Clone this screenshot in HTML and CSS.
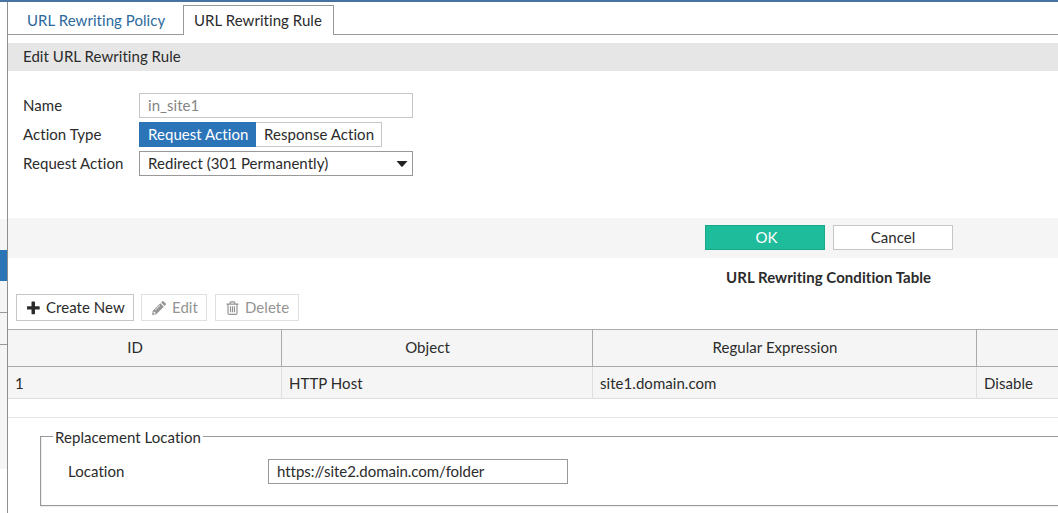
FILE: index.html
```html
<!DOCTYPE html>
<html lang="en">
<head>
    <meta charset="UTF-8">
    <meta name="viewport" content="width=device-width, initial-scale=1.0">
    <title>URL Rewriting Rule</title>
    <link rel="stylesheet" href="styles.css">
</head>
<body>
    <div class="sidebar">
        <div class="side-item first"></div>
        <div class="side-item active"></div>
        <div class="side-item"></div>
        <div class="side-item bordered"></div>
        <div class="side-item bordered last"></div>
    </div>
    <div class="main">
        <div class="tabs">
            <a class="tab">URL Rewriting Policy</a>
            <a class="tab active">URL Rewriting Rule</a>
            <div class="tab-fill"></div>
        </div>
        <div class="title-bar">Edit URL Rewriting Rule</div>

        <form class="rule-form">
            <div class="form-row">
                <label>Name</label>
                <div class="field disabled">in_site1</div>
            </div>
            <div class="form-row">
                <label>Action Type</label>
                <div class="toggle">
                    <span class="option selected">Request Action</span>
                    <span class="option">Response Action</span>
                </div>
            </div>
            <div class="form-row">
                <label>Request Action</label>
                <div class="field select">
                    <span>Redirect (301 Permanently)</span>
                    <svg class="caret" width="12" height="6" viewBox="0 0 12 6"><path d="M0.5 0H11.5L6.7 5.4Q6 6 5.3 5.4Z"/></svg>
                </div>
            </div>
        </form>

        <div class="actions">
            <div class="btn ok">OK</div>
            <div class="btn">Cancel</div>
        </div>

        <div class="table-title">URL Rewriting Condition Table</div>
        <div class="toolbar">
            <div class="tool create">
                <svg width="14" height="14" viewBox="0 0 14 14"><path d="M5.1 .5h2.300q.6 0 .6.6v4.100h4.100q.6 0 .6.6v2.100q0 .6-.6.6H8v4.100q0 .6-.6.6H5.100q-.6 0-.6-.6V8.500H.6q-.6 0-.6-.6V5.800q0-.6.6-.6H4.500V1.100q0-.6.6-.6z"/></svg>
                <span>Create New</span>
            </div>
            <div class="tool edit disabled">
                <svg width="14" height="14" viewBox="0 0 14 14"><path fill-rule="evenodd" d="M0 14l.8-4.200L8.300 2.300l3.500 3.500L4.200 13.200zM9.100 1.500L10.300.4q.7-.7 1.400 0l2 2q.6.7 0 1.400L12.600 5zM1.700 10.700l-.3 1.200 1 .9 1.100-.3v-.9h-.9v-.9zM2.900 9l.4.4 4.900-4.900-.4-.4z"/></svg>
                <span>Edit</span>
            </div>
            <div class="tool delete disabled">
                <svg width="14" height="14" viewBox="0 0 14 14"><path d="M.5 3.200h12M4.100 3V1.800q0-1 1-1h2.800q1 0 1 1V3M2 3.500v8.400q0 1.500 1.300 1.500h6.400q1.300 0 1.300-1.500V3.500M4.500 5.300v6M6.500 5.300v6M8.500 5.300v6" fill="none" stroke="currentColor" stroke-width="1.200"/></svg>
                <span>Delete</span>
            </div>
        </div>

        <table class="conditions">
            <thead>
                <tr><th>ID</th><th>Object</th><th>Regular Expression</th><th></th></tr>
            </thead>
            <tbody>
                <tr><td>1</td><td>HTTP Host</td><td>site1.domain.com</td><td>Disable</td></tr>
            </tbody>
        </table>

        <div class="replacement">
            <fieldset>
                <legend>Replacement Location</legend>
                <div class="location-row">
                    <label>Location</label>
                    <div class="field">https://site2.domain.com/folder</div>
                </div>
            </fieldset>
        </div>
    </div>
</body>
</html>
```

FILE: styles.css
```css
* {
    box-sizing: border-box;
}

body {
    margin: 0;
    height: 513px;
    display: flex;
    overflow: hidden;
    border-top: 2px solid #4773a0;
    background: #fff;
    color: #2b2b2b;
    font-family: Lato, sans-serif;
    font-size: 15px;
    font-variant-ligatures: none;
    letter-spacing: 0.05px;
    line-height: 16px;
}

/* Sidebar edge */
.sidebar {
    flex: 0 0 8px;
    padding-top: 217px;
    border-right: 1px solid #8f8f8f;
}

.side-item {
    height: 31px;
    background: #f5f5f5;
}

.side-item.active {
    background: #2b74b8;
}

.side-item.bordered {
    height: 32px;
    border-top: 1px solid #999;
}

.side-item.last {
    height: 125px;
}

.main {
    flex: 1;
    min-width: 0;
}

/* Tabs */
.tabs {
    display: flex;
    height: 33px;
    padding-top: 3px;
}

.tab {
    width: 175px;
    padding: 7px 0 0 19px;
    border-bottom: 1px solid #999;
    color: #2c699c;
}

.tab.active {
    width: 151px;
    padding: 6px 0 0 10px;
    border: 1px solid #999;
    border-bottom: 0;
    color: #2b2b2b;
}

.tab-fill {
    flex: 1;
    border-bottom: 1px solid #999;
}

.title-bar {
    height: 28px;
    margin-top: 8px;
    padding: 5px 15px;
    background: #e6e6e6;
}

/* Rule form */
.rule-form {
    display: flex;
    flex-direction: column;
    gap: 4px;
    height: 147px;
    padding: 22px 15px 0;
}

.form-row {
    display: flex;
    align-items: center;
    height: 25px;
}

.form-row label {
    width: 116px;
    padding-bottom: 2px;
}

.field {
    width: 274px;
    height: 25px;
    padding: 3px 8px;
    border: 1px solid #999;
    background: #fff;
}

.field.disabled {
    border-color: #c6c6c6;
    color: #858585;
}

.field.select {
    display: flex;
    justify-content: space-between;
    padding-right: 4px;
}

.caret {
    margin-top: 6px;
    fill: #222;
}

.toggle {
    display: flex;
}

.option {
    width: 126px;
    height: 25px;
    padding: 3px 0 3px 8px;
    border: 1px solid #c6c6c6;
    border-left: 0;
}

.option.selected {
    width: 117px;
    padding-left: 9px;
    border-color: #2b74b8;
    background: #2b74b8;
    color: #fff;
}

.actions {
    display: flex;
    gap: 8px;
    height: 40px;
    padding: 7px 0 0 697px;
    background: #f5f5f5;
}

.btn {
    width: 120px;
    height: 25px;
    padding: 3px 0;
    border: 1px solid #c6c6c6;
    background: #fff;
    text-align: center;
}

.btn.ok {
    padding-left: 3px;
    border-color: #19a78a;
    background: #1fbc9c;
    color: #fff;
}

/* Condition table */
.table-title {
    height: 36px;
    padding: 11px 0 0 718px;
    font-weight: bold;
    white-space: nowrap;
}

.toolbar {
    display: flex;
    gap: 8px;
    height: 35px;
    padding-left: 8px;
}

.tool {
    display: flex;
    align-items: center;
    gap: 5px;
    width: 118px;
    height: 27px;
    padding-left: 10px;
    border: 1px solid #c6c6c6;
    white-space: nowrap;
}

.tool span {
    padding-bottom: 2px;
}

.tool svg {
    fill: currentColor;
}

.tool.edit {
    width: 66px;
    margin-left: -1px;
    gap: 6px;
}

.tool.delete {
    width: 84px;
}

.tool.disabled {
    border-color: #e0e0e0;
    color: #949494;
}

.conditions {
    width: 100%;
    border-spacing: 0;
    table-layout: fixed;
    background: #f5f5f5;
}

.conditions th {
    height: 38px;
    padding: 0 19px 2px 0;
    border: solid #aaa;
    border-width: 1px 1px 1px 0;
    font-weight: normal;
}

.conditions th:first-child {
    width: 274px;
}

.conditions th:nth-child(2) {
    width: 311px;
}

.conditions th:nth-child(3) {
    width: 384px;
}

.conditions td {
    height: 32px;
    padding: 0 7px;
    border: solid #dfdfdf;
    border-width: 0 1px 1px 0;
}

.conditions th:last-child,
.conditions td:last-child {
    border-right: 0;
}

/* Replacement location */
.replacement {
    margin-top: 18px;
    padding: 11px 0 0 32px;
    border-top: 1px solid #e8e8e8;
}

fieldset {
    height: 77px;
    margin: 0;
    padding: 15px 0 0 27px;
    border: 1px solid #999;
    border-right: 0;
    box-shadow: inset 1px 0 #eee, 0 1px #eee;
}

legend {
    height: 15px;
    margin-left: -15px;
    padding: 0 2px;
}

.location-row {
    display: flex;
    align-items: center;
}

.location-row label {
    width: 200px;
    padding-bottom: 2px;
}

.location-row .field {
    width: 300px;
    letter-spacing: -0.04px;
}
```
